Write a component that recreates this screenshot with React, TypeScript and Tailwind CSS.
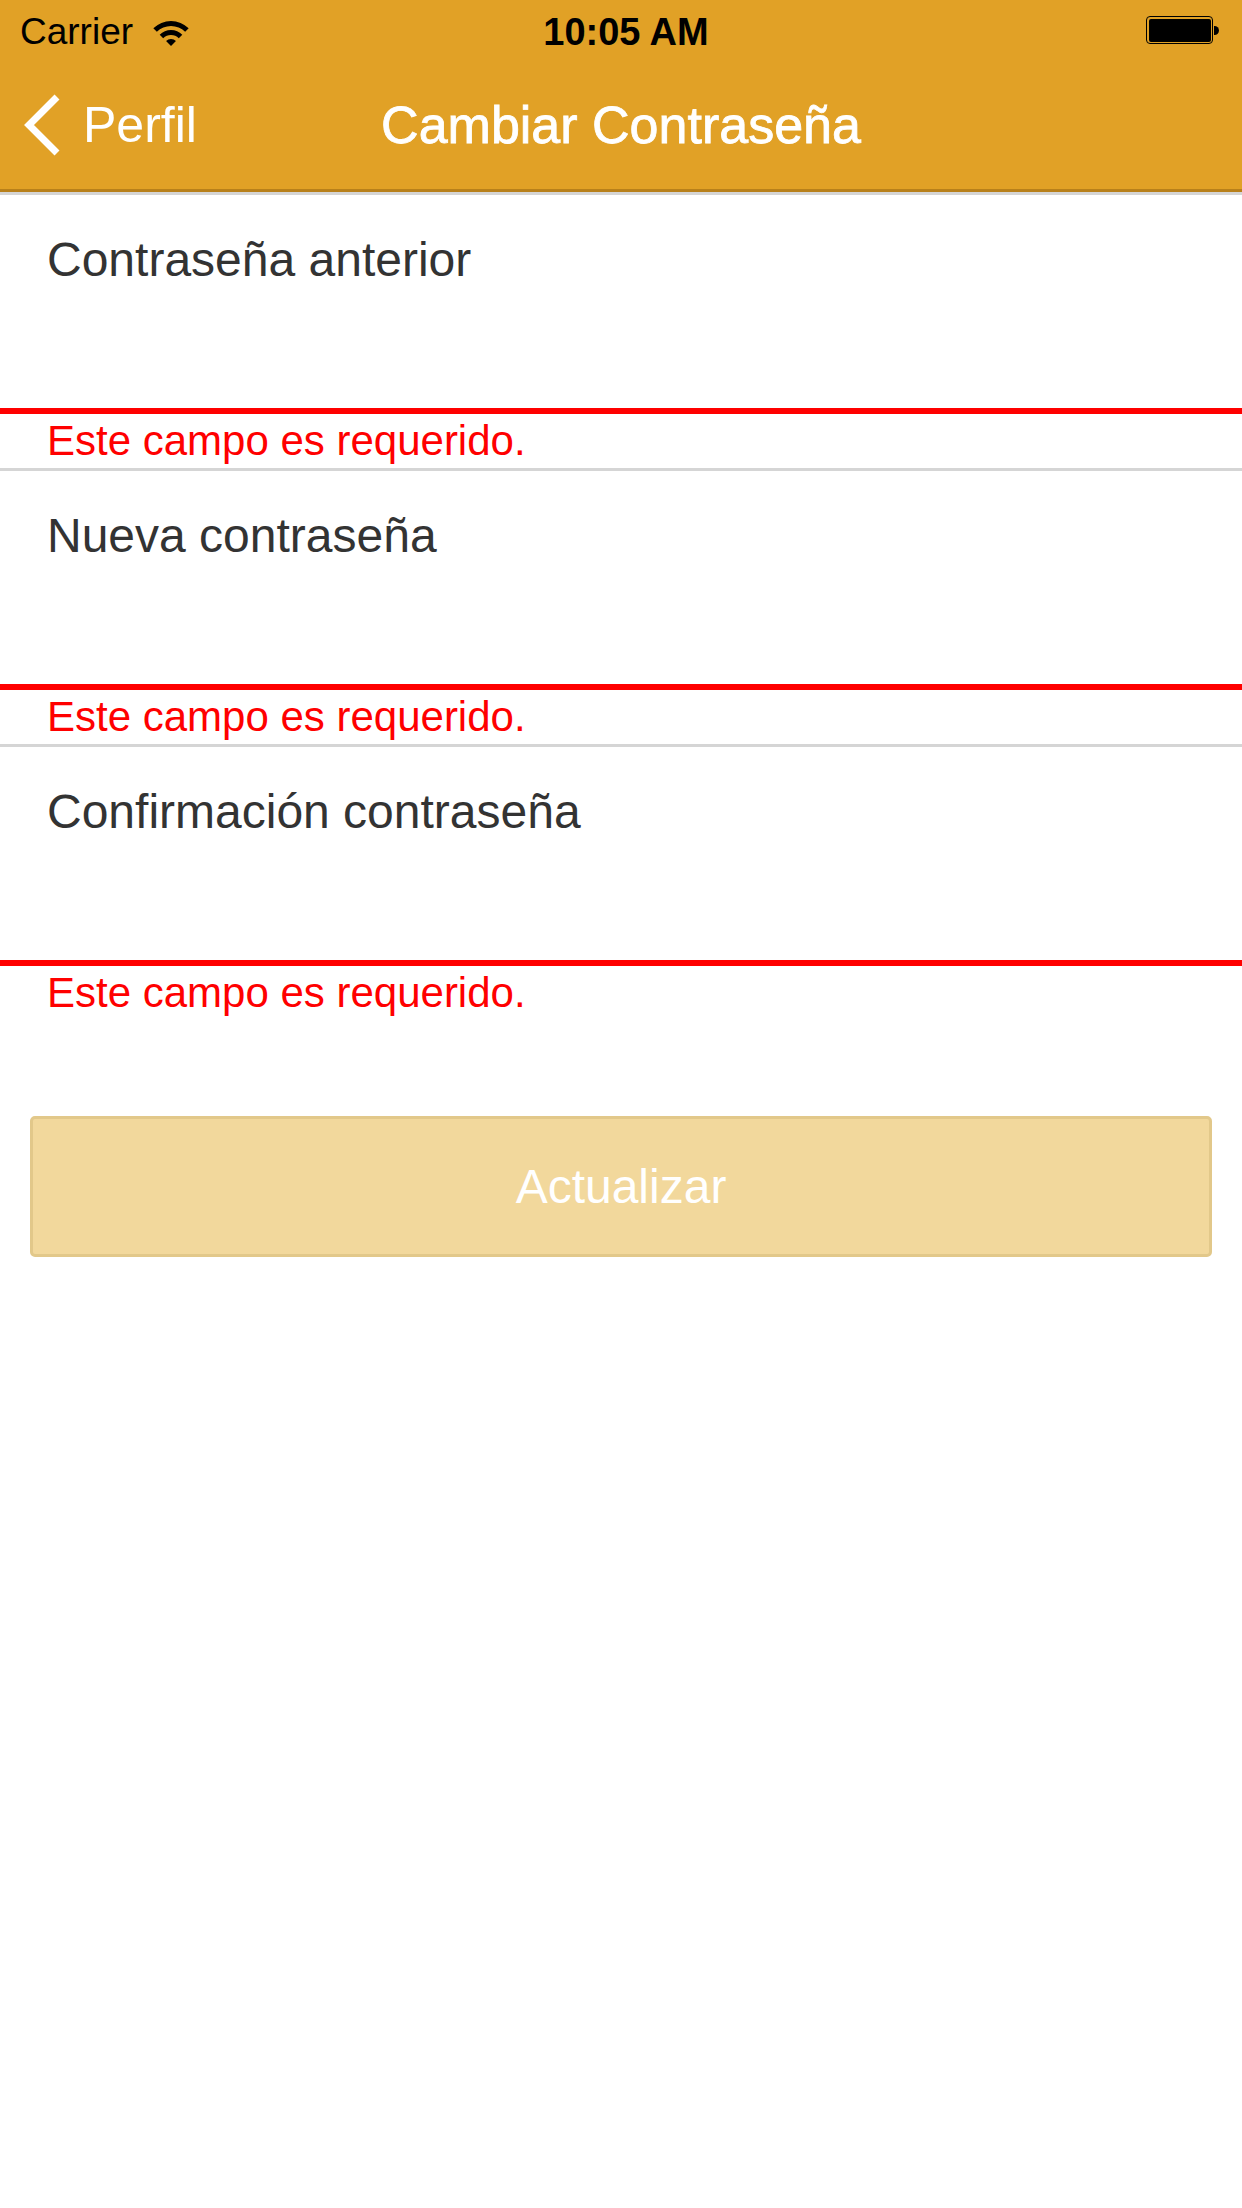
import { useState } from 'react'

const fields = ['Contraseña anterior', 'Nueva contraseña', 'Confirmación contraseña']

function WifiIcon() {
  return (
    <svg width="36" height="26" viewBox="0 0 36 26" className="block">
      <path d="M0.32 8.32 A25 25 0 0 1 35.68 8.32 L32.14 11.86 A20 20 0 0 0 3.86 11.86 Z" fill="#000" />
      <path d="M6.69 14.69 A16 16 0 0 1 29.31 14.69 L25.78 18.22 A11 11 0 0 0 10.22 18.22 Z" fill="#000" />
      <path d="M18 26 L13.05 21.05 A7 7 0 0 1 22.95 21.05 Z" fill="#000" />
    </svg>
  )
}

function Battery() {
  return (
    <div className="flex items-center">
      <div className="w-[67px] h-[28px] rounded-[4px] border-[1.5px] border-black p-[1.5px]">
        <div className="w-full h-full rounded-[2px] bg-black" />
      </div>
      <div className="w-[5px] h-[9px] rounded-r-full bg-black ml-[1px]" />
    </div>
  )
}

function Field({ label }: { label: string }) {
  return (
    <div>
      <div className="h-[213px] pt-[41px] pl-[47px]">
        <span className="block text-[48px] leading-[48px] text-[#333333]">{label}</span>
      </div>
      <div className="h-[6px] bg-[#ff0000]" />
      <div className="h-[54px] pt-[6px] pl-[47px] text-[42px] leading-[42px] text-[#ff0000]">
        Este campo es requerido.
      </div>
    </div>
  )
}

export default function App() {
  const [values] = useState(fields)

  return (
    <div className="min-h-[2208px] w-full bg-white font-['Liberation_Sans',Arial,sans-serif]">
      <header className="bg-[#e1a126] border-b-[3px] border-[#b8801a]">
        <div className="h-[60px] relative flex items-start pt-[13px] px-[20px] text-black text-[37px] leading-[37px]">
          <div className="flex items-center gap-[20px]">
            <span>Carrier</span>
            <span className="pt-[2px]">
              <WifiIcon />
            </span>
          </div>
          <span className="absolute left-[calc(50%+5px)] -translate-x-1/2 font-bold text-[38px] leading-[38px]">10:05 AM</span>
          <div className="ml-auto pt-[3px] pr-[3px]">
            <Battery />
          </div>
        </div>
        <div className="h-[129px] relative flex items-center text-white">
          <button className="flex items-center gap-[21px] pl-[22px]">
            <svg width="40" height="62" viewBox="0 0 40 62" className="block">
              <path d="M35 3 L7 31 L35 59" fill="none" stroke="#fff" strokeWidth="7" />
            </svg>
            <span className="text-[50px] leading-[50px]">Perfil</span>
          </button>
          <h1 className="absolute left-1/2 -translate-x-1/2 text-[52px] leading-[52px] whitespace-nowrap [-webkit-text-stroke:0.8px_#ffffff]">
            Cambiar Contraseña
          </h1>
        </div>
      </header>

      <div className="h-[3px] bg-[#d5d5d5]" />
      {values.map((label, i) => (
        <div key={label}>
          <Field label={label} />
          {i < values.length - 1 && <div className="h-[3px] bg-[#d5d5d5]" />}
        </div>
      ))}

      <div className="px-[30px] pt-[96px]">
        <button className="w-full h-[141px] rounded-[5px] border-[3px] border-[#e2c88a] bg-[#f2d89c] text-white text-[48px] leading-[48px]">
          Actualizar
        </button>
      </div>
    </div>
  )
}
